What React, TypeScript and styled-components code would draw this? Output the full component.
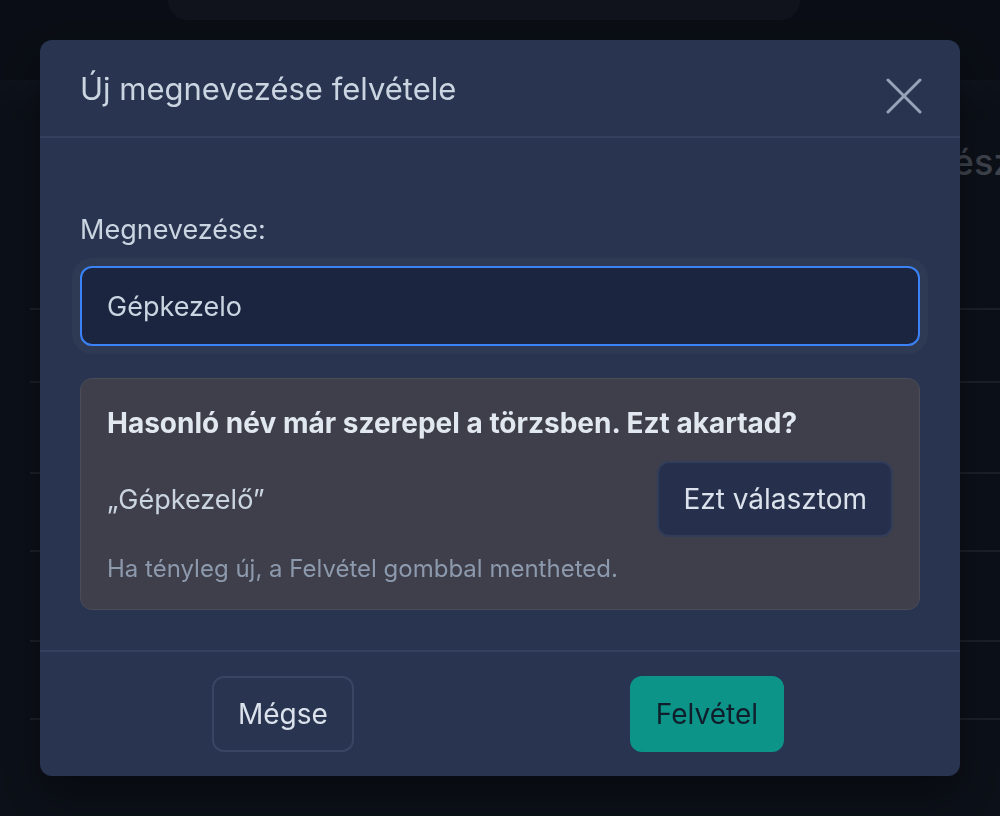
import styled, { createGlobalStyle } from "styled-components";

const GlobalStyle = createGlobalStyle`
  html, body {
    margin: 0;
    padding: 0;
    height: 816px;
    overflow: hidden;
    background: #141b28;
    font-family: Inter, "Noto Sans", "Liberation Sans", sans-serif;
  }
  * {
    box-sizing: border-box;
  }
`;

const Page = styled.div`
  width: 1000px;
  height: 816px;
  overflow: hidden;
  background: #141b28;
  white-space: nowrap;
`;

const TopBar = styled.header`
  height: 80px;
  background: #111723;
  box-shadow: 0 12px 24px rgba(40, 48, 64, 0.35);
  padding-left: 168px;
`;

const SearchPill = styled.div`
  width: 632px;
  height: 20px;
  background: #1b2130;
  border-radius: 0 0 28px 28px;
`;

const Main = styled.main`
  padding: 60px 0 0 30px;
`;

const PageTitle = styled.h1`
  margin: 0 0 0 900px;
  font-size: 36px;
  line-height: 44px;
  font-weight: 500;
  color: #666e7d;
`;

const Table = styled.div`
  margin-top: 124px;
  border-top: 2px solid #2d3441;
`;

const TableRow = styled.div<{ $h: number }>`
  height: ${(p) => p.$h}px;
  border-bottom: 2px solid #2d3441;
`;

const Overlay = styled.div`
  position: fixed;
  inset: 0;
  background: rgba(0, 0, 0, 0.4);
  display: flex;
  justify-content: center;
  align-items: flex-start;
  padding-top: 40px;
`;

const Modal = styled.div`
  width: 920px;
  background: #283450;
  border-radius: 12px;
  box-shadow: 0 20px 40px rgba(0, 0, 0, 0.35);
  overflow: hidden;
`;

const Header = styled.div`
  height: 98px;
  display: flex;
  justify-content: space-between;
  align-items: flex-start;
  padding: 31px 38px 0 40px;
  border-bottom: 2px solid #34405e;
`;

const Title = styled.h2`
  margin: 0;
  font-size: 31px;
  line-height: 36px;
  font-weight: 400;
  color: #cbd5e1;
`;

const CloseButton = styled.button`
  width: 36px;
  height: 36px;
  margin-top: 7px;
  padding: 0;
  border: none;
  background: transparent;
  color: #97a3b7;
  cursor: pointer;
  display: flex;
`;

const Body = styled.div`
  padding: 76px 40px 40px;
`;

const Label = styled.label`
  display: block;
  font-size: 27px;
  line-height: 32px;
  color: #cbd5e1;
`;

const Input = styled.input`
  display: block;
  width: 100%;
  height: 80px;
  margin-top: 20px;
  padding: 0 25px;
  background: #1b253f;
  border: 2px solid #3b82f6;
  border-radius: 12px;
  box-shadow: 0 0 0 8px #2e3a54;
  outline: none;
  font-family: inherit;
  font-size: 27px;
  color: #cbd5e1;
`;

const Suggestion = styled.div`
  margin-top: 32px;
  padding: 27px 26px 25px;
  background: #3e3f4a;
  border: 1px solid #4a4c58;
  border-radius: 12px;
`;

const SuggestionTitle = styled.div`
  font-size: 28px;
  line-height: 34px;
  font-weight: 700;
  color: #e2e8f0;
`;

const SuggestionRow = styled.div`
  display: flex;
  justify-content: space-between;
  align-items: center;
  margin-top: 21px;
`;

const SuggestionName = styled.span`
  font-size: 27px;
  color: #cbd5e1;
`;

const Hint = styled.div`
  margin-top: 17px;
  font-size: 24px;
  line-height: 30px;
  color: #8d99ad;
`;

const Button = styled.button<{ $variant: "primary" | "outline" | "soft" }>`
  height: 76px;
  padding: 0 24px;
  border-radius: 12px;
  font-family: inherit;
  font-size: 28px;
  cursor: pointer;
  border: 2px solid
    ${(p) => (p.$variant === "primary" ? "#0d9488" : p.$variant === "soft" ? "#323d5a" : "#3a4563")};
  background: ${(p) =>
    p.$variant === "primary" ? "#0d9488" : p.$variant === "soft" ? "#26304c" : "transparent"};
  color: ${(p) => (p.$variant === "primary" ? "#0f1e2a" : "#dbe2ec")};
`;

const Footer = styled.div`
  display: flex;
  justify-content: space-around;
  align-items: center;
  padding: 24px 38px 24px 34px;
  border-top: 2px solid #34405e;
`;

const rows = [73, 91, 78, 90, 78];

export default function App() {
  return (
    <>
      <GlobalStyle />
      <Page>
        <TopBar>
          <SearchPill />
        </TopBar>
        <Main>
          <PageTitle>Részletezés</PageTitle>
          <Table>
            {rows.map((h, i) => (
              <TableRow key={i} $h={h} />
            ))}
          </Table>
        </Main>
      </Page>
      <Overlay>
        <Modal>
          <Header>
            <Title>Új megnevezése felvétele</Title>
            <CloseButton aria-label="Bezárás">
              <svg width="36" height="36" viewBox="0 0 36 36">
                <path d="M2 2 L34 34 M34 2 L2 34" stroke="currentColor" strokeWidth="3" strokeLinecap="round" />
              </svg>
            </CloseButton>
          </Header>
          <Body>
            <Label>Megnevezése:</Label>
            <Input defaultValue="Gépkezelo" />
            <Suggestion>
              <SuggestionTitle>Hasonló név már szerepel a törzsben. Ezt akartad?</SuggestionTitle>
              <SuggestionRow>
                <SuggestionName>„Gépkezelő”</SuggestionName>
                <Button $variant="soft">Ezt választom</Button>
              </SuggestionRow>
              <Hint>Ha tényleg új, a Felvétel gombbal mentheted.</Hint>
            </Suggestion>
          </Body>
          <Footer>
            <Button $variant="outline">Mégse</Button>
            <Button $variant="primary">Felvétel</Button>
          </Footer>
        </Modal>
      </Overlay>
    </>
  );
}
